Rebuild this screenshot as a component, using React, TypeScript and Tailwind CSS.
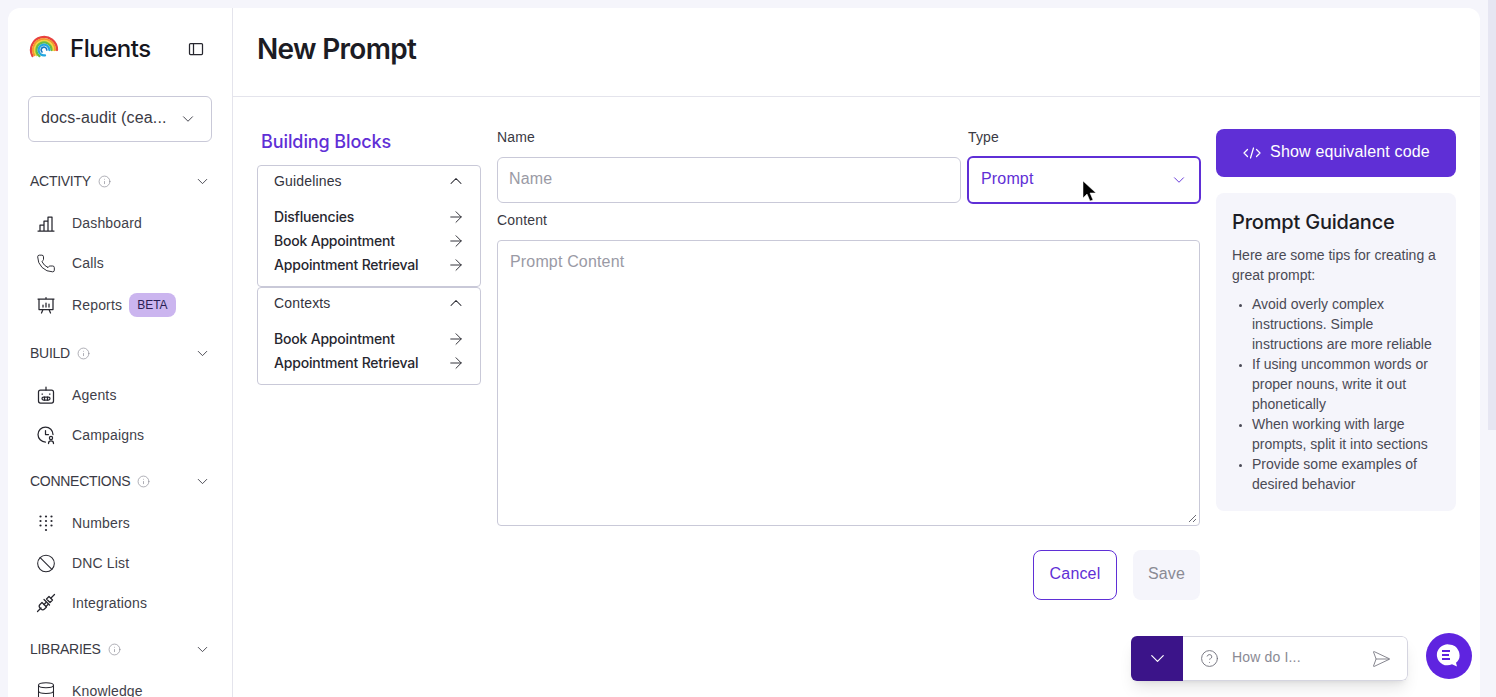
import React from "react";
import { ChevronDown, ChevronUp, ArrowRight, Info, Phone, Ban, Database, CircleHelp, SendHorizontal } from "lucide-react";

const Ic = ({ children, size = 20 }: { children: React.ReactNode; size?: number }) => (
  <svg width={size} height={size} viewBox="0 0 20 20" fill="none" stroke="#27272f" strokeWidth="1.25" strokeLinecap="round" strokeLinejoin="round" className="shrink-0">
    {children}
  </svg>
);

const Dash = () => (
  <Ic>
    <path d="M2 18h16M4 18v-6h4v6M8 18V8h4v10M12 18V4h4v14" />
  </Ic>
);
const Reports = () => (
  <Ic>
    <path d="M2 4h16M3 4v10.5h14V4M10 2.5V4M7 14.5 5.5 18M13 14.5l1.5 3.500" />
    <path d="M7 12v-2M10 12V8M13 12v-3" />
  </Ic>
);
const Agents = () => (
  <Ic>
    <rect x="2.500" y="5" width="15" height="13" rx="2" />
    <path d="M10 2v3M6 9h.5M13.500 9h.5" />
    <rect x="6" y="12" width="8" height="3" rx="1.500" />
    <path d="M8.500 12v3M11.500 12v3" />
  </Ic>
);
const Campaigns = () => (
  <Ic>
    <path d="M17 9.500A7.500 7.500 0 1 0 9.500 17" />
    <path d="M9.500 5.500V9.500h3" />
    <circle cx="15" cy="13" r="1.600" />
    <path d="M12.500 18.500c0-1.700 1-2.700 2.500-2.700s2.500 1 2.500 2.700" />
  </Ic>
);
const Numbers = () => (
  <svg width="20" height="20" viewBox="0 0 20 20" fill="#27272f" className="shrink-0">
    {[3.5, 8, 12.5].map((y) => [4.5, 10, 15.5].map((x) => <circle key={`${x}-${y}`} cx={x} cy={y} r="1.100" />))}
    <circle cx="10" cy="17" r="1.100" />
  </svg>
);
const Plug = () => (
  <Ic>
    <path d="M1.500 18.500 5 15M15 5l3.500-3.500" />
    <path d="M8 6.500l5.500 5.500M6 9.500l4.500 4.500-2 2a2.500 2.500 0 0 1-3.500 0l-1-1a2.500 2.500 0 0 1 0-3.500z" />
    <path d="M10 9.500l-2 2M12 11.500l-2 2" />
    <path d="M10.500 6 13 3.500l3.500 3.500L14 9.500z" />
  </Ic>
);
const Logo = () => (
  <svg width="30" height="30" viewBox="0 0 30 30" fill="none" strokeLinecap="round" strokeWidth="2.300" className="shrink-0">
    <path d="M3.500 22A13 13 0 1 1 28 16" stroke="#e8423f" />
    <path d="M5.300 21A10.900 10.900 0 1 1 25.900 16" stroke="#f39a2d" />
    <path d="M7.500 21A9 9 0 1 1 24 16" stroke="#f3d53f" />
    <path d="M10.500 22A7.500 7.500 0 1 1 22.500 16" stroke="#68bd45" />
    <path d="M16 21.300A5.400 5.400 0 1 1 20.400 16" stroke="#23a7e0" />
    <path d="M13 18A2.830 2.830 0 1 1 17.800 16" stroke="#1a78c2" strokeWidth="1.700" />
  </svg>
);

const Section = ({ title, gap }: { title: string; gap: string }) => (
  <div className={`flex h-5 items-center justify-between pl-0.5 pr-[1px] text-sm text-[#3a3a44] ${gap}`}>
    <div className="flex items-center gap-[7px]">
      <span className="tracking-[-0.02em]">{title}</span>
      <Info size={13} strokeWidth={1.25} color="#8a8a94" />
    </div>
    <ChevronDown size={17} strokeWidth={1.25} color="#3a3a44" />
  </div>
);

const Item = ({ icon, label, badge, cls = "h-10" }: { icon: React.ReactNode; label: string; badge?: boolean; cls?: string }) => (
  <div className={`flex items-center pl-2 text-sm text-[#3f3f4a] ${cls}`}>
    <div className="flex w-5 justify-center">{icon}</div>
    <span className="ml-4">{label}</span>
    {badge && <span className="ml-[7px] flex h-6 items-center rounded-lg bg-[#cbb5ef] px-2 text-xs tracking-normal text-[#2a1f55]">BETA</span>}
  </div>
);

const Block = ({ title, items, cls }: { title: string; items: string[]; cls: string }) => (
  <div className={`w-56 rounded border border-[#c9c9d8] px-4 ${cls}`}>
    <div className="flex h-[29px] items-center justify-between text-sm text-[#33333d]">
      <span>{title}</span>
      <ChevronUp size={20} strokeWidth={1.25} color="#27272f" className="-mr-[2px]" />
    </div>
    <div className="mt-[10px] flex flex-col">
      {items.map((t) => (
        <div key={t} className="flex h-6 items-center justify-between font-['Inter',sans-serif] text-sm font-medium tracking-[-0.014em] text-[#27272f]">
          <span>{t}</span>
          <ArrowRight size={18} strokeWidth={1.25} color="#27272f" className="-mr-[1px]" />
        </div>
      ))}
    </div>
  </div>
);

export default function App() {
  return (
    <div className="flex h-[697px] overflow-hidden bg-[#f5f5fb] pl-2 pt-2 font-['Liberation_Sans',Arial,sans-serif] tracking-[0.01em] antialiased">
      <div className="relative flex w-[1472px] shrink-0 overflow-hidden rounded-t-xl bg-white">
        <aside className="w-[225px] shrink-0 border-r border-[#e4e4ec] px-5">
          <div className="flex h-[88px] items-center pb-[6px] pl-[1px]">
            <Logo />
            <span className="ml-[11px] font-['Inter',sans-serif] text-2xl font-medium tracking-[-0.02em] text-[#16161d]">Fluents</span>
            <svg width="16" height="16" viewBox="0 0 16 16" fill="none" stroke="#27272f" strokeWidth="1.250" className="ml-auto mr-2 shrink-0">
              <rect x="1.500" y="2.500" width="13" height="11" rx="1" />
              <path d="M5.500 2.500v11" />
            </svg>
          </div>
          <div className="flex h-[46px] items-center justify-between rounded-md border border-[#c9c9d8] pl-3 pr-[14px] text-base text-[#3a3a44]">
            <span className="pb-[2px]">docs-audit (cea...</span>
            <ChevronDown size={18} strokeWidth={1.25} />
          </div>
          <Section title="ACTIVITY" gap="mt-[29px]" />
          <div className="mt-[12px]">
            <Item icon={<Dash />} label="Dashboard" />
            <Item icon={<Phone size={21} strokeWidth={1.15} color="#27272f" />} label="Calls" />
            <Item icon={<Reports />} label="Reports" badge cls="h-11" />
          </div>
          <Section title="BUILD" gap="mt-[16px]" />
          <div className="mt-[12px]">
            <Item icon={<Agents />} label="Agents" />
            <Item icon={<Campaigns />} label="Campaigns" />
          </div>
          <Section title="CONNECTIONS" gap="mt-[16px]" />
          <div className="mt-[12px]">
            <Item icon={<Numbers />} label="Numbers" />
            <Item icon={<Ban size={21} strokeWidth={1.25} color="#27272f" />} label="DNC List" />
            <Item icon={<Plug />} label="Integrations" />
          </div>
          <Section title="LIBRARIES" gap="mt-[16px]" />
          <div className="mt-[12px]">
            <Item icon={<Database size={20} strokeWidth={1.25} color="#27272f" />} label="Knowledge" />
          </div>
        </aside>
        <main className="min-w-0 flex-1">
          <header className="flex h-[89px] items-center border-b border-[#e4e4ec] px-6 pb-[6px]">
            <h1 className="font-['Inter',sans-serif] text-[28px] font-semibold tracking-[-0.025em] text-[#1c1c24]">New Prompt</h1>
          </header>
          <div className="flex gap-4 px-6 pt-8">
            <div className="w-56 shrink-0">
              <h2 className="mt-[1px] pl-1 font-['Inter',sans-serif] text-lg leading-6 font-medium tracking-[-0.005em] text-[#5f2fd6]">Building Blocks</h2>
              <Block title="Guidelines" items={["Disfluencies", "Book Appointment", "Appointment Retrieval"]} cls="mt-[11px] h-[122px]" />
              <Block title="Contexts" items={["Book Appointment", "Appointment Retrieval"]} cls="h-[98px]" />
            </div>
            <div className="w-[703px] shrink-0">
              <div className="flex gap-[7px]">
                <div className="w-[464px]">
                  <div className="-mt-[2px] text-sm leading-5 text-[#3a3a44]">Name</div>
                  <div className="mt-[10px] flex h-[46px] items-center rounded-md border border-[#c9c9d8] pb-[2px] pl-[11px] text-base text-[#9a9aa5]">Name</div>
                </div>
                <div className="flex-1">
                  <div className="-mt-[2px] text-sm leading-5 text-[#3a3a44]">Type</div>
                  <div className="relative -mx-[1px] mt-[9px] flex h-[48px] items-center justify-between rounded-md border-2 border-[#5f2fd6] pl-3 pr-[11px] text-base text-[#5f2fd6]">
                    <span className="pb-[2px]">Prompt</span>
                    <ChevronDown size={18} strokeWidth={1.25} />
                    <svg width="18" height="24" viewBox="0 0 18 24" className="absolute left-[113px] top-[22px]">
                      <path d="M1 1v17l4-4 3 7 3-1-3-7h6z" fill="#000" stroke="#fff" strokeWidth="0.500" />
                    </svg>
                  </div>
                </div>
              </div>
              <div className="-mt-[1px] text-sm leading-5 text-[#3a3a44]">
                <div className="mt-[7px]">Content</div>
              </div>
              <div className="relative mt-[10px] h-[286px] rounded border border-[#c9c9d8] pb-[10px] pl-3 pt-[9px] text-base text-[#9a9aa5]">
                Prompt Content
                <svg width="9" height="9" viewBox="0 0 9 9" className="absolute bottom-[2px] right-[2px]" stroke="#6b6b75" strokeWidth="1">
                  <path d="M1 8 8 1M5 8l3-3" />
                </svg>
              </div>
              <div className="mt-6 flex justify-end gap-4">
                <div className="flex h-[50px] w-[84px] items-center justify-center rounded-lg border border-[#5f2fd6] pb-[2px] text-base text-[#5f2fd6]">Cancel</div>
                <div className="flex h-[50px] w-[67px] items-center justify-center rounded-lg bg-[#f5f5fb] pb-[2px] text-base text-[#8a8a94]">Save</div>
              </div>
            </div>
            <div className="w-60 shrink-0">
              <div className="flex h-12 items-center justify-center gap-2 rounded-lg bg-[#5f2fd6] pb-[2px] text-base text-white">
                <svg width="20" height="20" viewBox="0 0 20 20" fill="none" stroke="#fff" strokeWidth="1.250" strokeLinecap="round" strokeLinejoin="round" className="mt-[2px]">
                  <path d="M5.500 6.500 2 10l3.500 3.500M14.500 6.500 18 10l-3.500 3.500M11.500 5l-3 10" />
                </svg>
                <span>Show equivalent code</span>
              </div>
              <div className="mt-4 h-[318px] rounded-lg bg-[#f5f5fb] px-4 pt-[15px]">
                <h3 className="font-['Inter',sans-serif] text-xl leading-7 font-medium tracking-[-0.01em] text-[#1c1c24]">Prompt Guidance</h3>
                <p className="mt-[9px] text-sm leading-5 tracking-normal text-[#4a4a55]">Here are some tips for creating a great prompt:</p>
                <ul className="mt-[9px] list-disc pl-5 text-sm leading-5 tracking-normal text-[#4a4a55] marker:text-[10px]">
                  <li>Avoid overly complex instructions. Simple instructions are more reliable</li>
                  <li>If using uncommon words or proper nouns, write it out phonetically</li>
                  <li>When working with large prompts, split it into sections</li>
                  <li>Provide some examples of desired behavior</li>
                </ul>
              </div>
            </div>
          </div>
        </main>
        <div className="absolute left-[1123px] top-[628px] flex h-[45px] w-[277px] overflow-hidden rounded-md bg-white shadow-lg">
          <div className="flex w-[52px] items-center justify-center bg-[#3b1489]">
            <ChevronDown size={23} strokeWidth={1.25} color="#fff" />
          </div>
          <div className="flex flex-1 items-center rounded-r-md border border-l-0 border-[#d5d5e0] pl-[17px] pr-4 text-sm text-[#8a8a94]">
            <CircleHelp size={19} strokeWidth={1.15} color="#6f6f7a" />
            <span className="ml-[13px] pb-[4px]">How do I...</span>
            <SendHorizontal size={20} strokeWidth={1} color="#6f6f7a" className="ml-auto" />
          </div>
        </div>
        <div className="absolute left-[1418px] top-[625px] flex h-[46px] w-[46px] items-center justify-center rounded-full bg-[#5f24e0]">
          <svg width="26" height="26" viewBox="0 0 26 26">
            <path d="M13 1.500a10.500 10.500 0 0 1 7 18.300l1 3.700-5-2.200A10.500 10.500 0 1 1 13 1.500z" fill="#fff" />
            <path d="M6 8h8M6 12h7M6 16h8" stroke="#5f24e0" strokeWidth="1.800" />
          </svg>
        </div>
      </div>
      <div className="ml-2 w-2 shrink-0 -mt-2">
        <div className="h-[430px] bg-[#e6e6f2]" />
      </div>
    </div>
  );
}
